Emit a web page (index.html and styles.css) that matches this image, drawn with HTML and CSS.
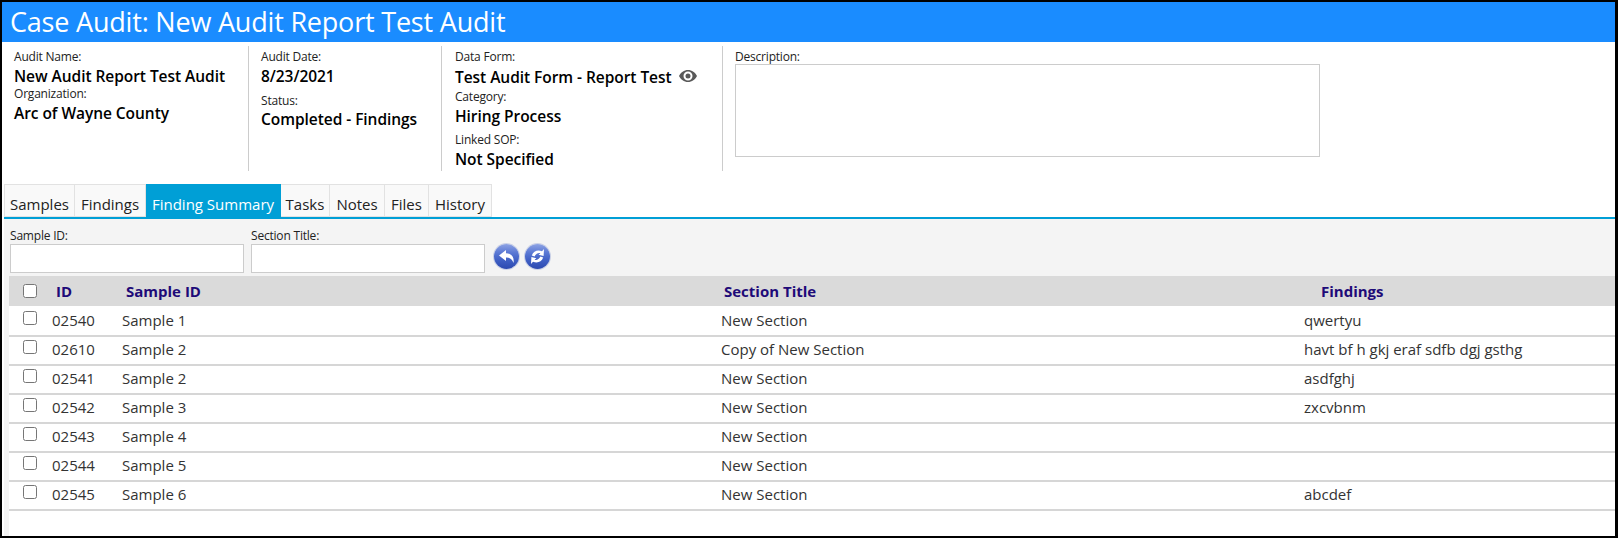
FILE: index.html
```html
<!DOCTYPE html>
<html lang="en">
<head>
    <meta charset="UTF-8">
    <title>Case Audit</title>
    <link rel="stylesheet" href="styles.css">
</head>
<body>
    <div class="page">
        <h1 class="title">Case Audit: New Audit Report Test Audit</h1>

        <div class="info">
            <div class="info-col col-name">
                <label>Audit Name:</label>
                <p>New Audit Report Test Audit</p>
                <label>Organization:</label>
                <p>Arc of Wayne County</p>
            </div>
            <div class="info-col col-date">
                <label>Audit Date:</label>
                <p class="gap-7">8/23/2021</p>
                <label>Status:</label>
                <p class="up-1">Completed - Findings</p>
            </div>
            <div class="info-col col-form">
                <label>Data Form:</label>
                <p class="first gap-2">Test Audit Form - Report Test
                    <svg class="eye" width="18" height="12" viewBox="0 0 18 12"><path fill="#595959" fill-rule="evenodd" d="M9 0C5 0 1.800 2.500 0 6c1.800 3.500 5 6 9 6s7.200-2.500 9-6c-1.800-3.500-5-6-9-6zm0 1.500a4.500 4.500 0 1 1 0 9 4.500 4.500 0 0 1 0-9zM9 3.500a2.500 2.500 0 1 0 0 5 2.500 2.500 0 0 0 0-5z"/></svg>
                </p>
                <label>Category:</label>
                <p class="gap-6">Hiring Process</p>
                <label>Linked SOP:</label>
                <p>Not Specified</p>
            </div>
            <div class="col-desc">
                <label>Description:</label>
                <textarea class="desc-box"></textarea>
            </div>
        </div>

        <div class="tabs">
            <a class="tab tab-samples">Samples</a>
            <a class="tab tab-findings">Findings</a>
            <a class="tab tab-summary active">Finding Summary</a>
            <a class="tab tab-tasks">Tasks</a>
            <a class="tab tab-notes">Notes</a>
            <a class="tab tab-files">Files</a>
            <a class="tab tab-history">History</a>
        </div>

        <div class="panel">
            <div class="filters">
                <div class="filter">
                    <label>Sample ID:</label>
                    <input type="text">
                </div>
                <div class="filter">
                    <label>Section Title:</label>
                    <input type="text">
                </div>
                <button class="round-btn">
                    <svg width="16" height="14" viewBox="0 0 16 14"><path fill="#fff" d="M7 0L0 5.500 7 11V7.600c3.500-.2 6 1 7.500 5.400C15.500 7 12.500 3.500 7 3.300z"/></svg>
                </button>
                <button class="round-btn">
                    <svg width="15" height="15" viewBox="0 0 15 15"><path fill="#fff" d="M14 0l-.4 7-5-1.300 1.800-1.500C8.600 3.400 6 4.400 4.600 7.400L1.800 6.400C3.500 1.800 8 .4 12 2.300zM1 15l.4-7 5 1.300-1.800 1.500c1.800.8 4.400-.2 5.800-3.200l2.800 1c-1.700 4.600-6.200 6-10.200 4.100z"/></svg>
                </button>
            </div>

            <div class="table-wrap">
                <table class="grid">
                    <colgroup>
                        <col class="c-check"><col class="c-id"><col class="c-sample"><col class="c-section"><col>
                    </colgroup>
                    <thead>
                        <tr>
                            <th><input type="checkbox"></th>
                            <th>ID</th>
                            <th>Sample ID</th>
                            <th class="th-section">Section Title</th>
                            <th class="th-findings">Findings</th>
                        </tr>
                    </thead>
                    <tbody>
                        <tr><td><input type="checkbox"></td><td>02540</td><td>Sample 1</td><td>New Section</td><td>qwertyu</td></tr>
                        <tr><td><input type="checkbox"></td><td>02610</td><td>Sample 2</td><td>Copy of New Section</td><td>havt bf h gkj eraf sdfb dgj gsthg</td></tr>
                        <tr><td><input type="checkbox"></td><td>02541</td><td>Sample 2</td><td>New Section</td><td>asdfghj</td></tr>
                        <tr><td><input type="checkbox"></td><td>02542</td><td>Sample 3</td><td>New Section</td><td>zxcvbnm</td></tr>
                        <tr><td><input type="checkbox"></td><td>02543</td><td>Sample 4</td><td>New Section</td><td></td></tr>
                        <tr><td><input type="checkbox"></td><td>02544</td><td>Sample 5</td><td>New Section</td><td></td></tr>
                        <tr><td><input type="checkbox"></td><td>02545</td><td>Sample 6</td><td>New Section</td><td>abcdef</td></tr>
                    </tbody>
                </table>
            </div>
        </div>
    </div>
</body>
</html>
```

FILE: styles.css
```css
html, body {
    margin: 0;
    height: 100%;
}
body {
    font-family: "Open Sans", "Noto Sans", sans-serif;
    color: #000;
    background: #fff;
}
.page {
    box-sizing: border-box;
    width: 1618px;
    height: 538px;
    border: 2px solid #000;
    border-right-width: 3px;
    display: flex;
    flex-direction: column;
    overflow: hidden;
}
.title {
    margin: 0;
    height: 40px;
    padding-left: 8px;
    background: #1a8cff;
    color: #fff;
    font-size: 27px;
    font-weight: 400;
    line-height: 40px;
    letter-spacing: -0.2px;
}
.info {
    display: flex;
    height: 141px;
    padding-top: 4px;
    box-sizing: border-box;
}
.info-col {
    box-sizing: border-box;
    height: 125px;
    border-right: 1px solid #ccc;
    padding: 3px 0 0 12px;
}
.col-name { width: 247px; }
.col-date { width: 193px; }
.col-form { width: 281px; padding-left: 13px; }
.col-desc { padding: 3px 0 0 12px; }
.info label {
    display: block;
    font-size: 12px;
    line-height: 16px;
    color: #222;
    letter-spacing: -0.2px;
}
.info p {
    margin: 1px 0 0;
    font-size: 15.500px;
    font-weight: 600;
    line-height: 20px;
    letter-spacing: -0.05px;
    white-space: nowrap;
}
.info p.first { margin-top: 2px; }
.info p.up-1 { margin-top: 0; }
.info p.gap-2 { margin-bottom: 2px; }
.info p.gap-6 { margin-bottom: 6px; }
.info p.gap-7 { margin-bottom: 7px; }
.eye {
    margin-left: 3px;
    vertical-align: 1px;
}
.desc-box {
    display: block;
    box-sizing: border-box;
    width: 585px;
    height: 93px;
    margin-top: -1px;
    border: 1px solid #ccc;
    background: #fff;
    padding: 0;
    resize: none;
}
.tabs {
    display: flex;
    height: 33px;
    margin: 1px 0 0 2px;
    box-sizing: border-box;
}
.tab {
    box-sizing: border-box;
    height: 33px;
    border: 1px solid #e2e2e2;
    border-left: 0;
    background: #f9f9f9;
    text-align: center;
    font-size: 15px;
    line-height: 38px;
    color: #222;
    white-space: nowrap;
}
.tab-samples { width: 71px; border-left: 1px solid #e2e2e2; }
.tab-findings { width: 71px; }
.tab-summary { width: 135px; }
.tab-tasks { width: 49px; }
.tab-notes { width: 55px; }
.tab-files { width: 44px; }
.tab-history { width: 63px; }
.tab.active {
    background: #009fd6;
    border-color: #009fd6;
    color: #fff;
}
.panel {
    flex: 1;
    margin-left: 2px;
    border-top: 2px solid #009fd6;
    background: #f4f4f4;
    display: flex;
    flex-direction: column;
}
.filters {
    display: flex;
    align-items: flex-end;
    height: 57px;
    box-sizing: border-box;
    padding: 0 0 3px 6px;
    gap: 7px;
}
.filter label {
    display: block;
    font-size: 12px;
    line-height: 16px;
    color: #222;
    letter-spacing: -0.2px;
}
.filter input {
    display: block;
    box-sizing: border-box;
    width: 234px;
    height: 29px;
    border: 1px solid #ccc;
    background: #fff;
    padding: 0;
}
.round-btn {
    width: 25px;
    height: 25px;
    padding: 0;
    margin: 0 0 4px;
    border: 0;
    border-radius: 50%;
    background: linear-gradient(#8ea3e4 0%, #5a78d4 35%, #3f5fc4 65%, #2c49b0 100%);
    box-shadow: 0 0 0 1px #c9d0e6;
    display: flex;
    align-items: center;
    justify-content: center;
}
.filter + .round-btn { margin-left: 2px; }
.round-btn + .round-btn { margin-left: -1px; }
.table-wrap {
    flex: 1;
    margin-left: 5px;
    background: #fff;
}
.grid {
    width: 100%;
    table-layout: fixed;
    border-collapse: collapse;
    font-size: 15px;
}
.c-check { width: 43px; }
.c-id { width: 70px; }
.c-sample { width: 599px; }
.c-section { width: 583px; }
.grid th {
    height: 30px;
    padding: 0 0 0 4px;
    background: #dadada;
    color: #1e0a78;
    font-weight: 700;
    font-size: 15px;
    text-align: left;
}
.grid th.th-section { padding-left: 3px; }
.grid th.th-findings { padding-left: 17px; }
.grid td {
    height: 25px;
    padding: 2px 0 0;
    line-height: 20px;
    vertical-align: top;
    border-bottom: 2px solid #d6d6d6;
    color: #333;
    white-space: nowrap;
}
.grid tbody tr:first-child td { padding-top: 4px; }
.grid th:first-child {
    padding: 0 0 0 14px;
}
.grid td:first-child {
    padding-left: 14px;
}
.grid input {
    display: block;
    margin: 0;
    width: 14px;
    height: 14px;
}
.grid td input { margin-top: 1px; }
.grid tbody tr:first-child input { margin-top: 1px; }
```
